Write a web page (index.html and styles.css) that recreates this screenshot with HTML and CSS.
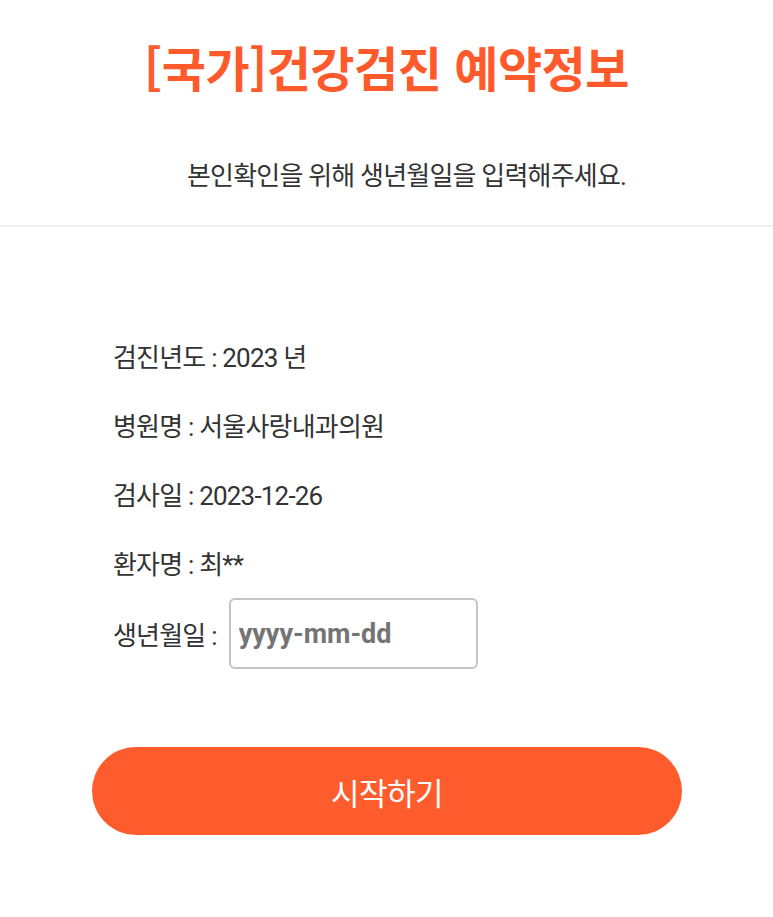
FILE: index.html
```html
<!DOCTYPE html>
<html lang="ko">
<head>
<meta charset="utf-8">
<title>[국가]건강검진 예약정보</title>
<link rel="stylesheet" href="styles.css">
</head>
<body>
<header class="header">
  <h1 class="title">[국가]건강검진 예약정보</h1>
  <p class="subtitle">본인확인을 위해 생년월일을 입력해주세요.</p>
</header>
<main class="info">
  <div class="row">검진년도 : 2023 년</div>
  <div class="row">병원명 : 서울사랑내과의원</div>
  <div class="row">검사일 : 2023-12-26</div>
  <div class="row">환자명 : 최**</div>
  <div class="row row-input">
    <span class="label">생년월일 :</span>
    <input class="birth" type="text" placeholder="yyyy-mm-dd">
  </div>
</main>
<div class="actions">
  <button class="start" type="button">시작하기</button>
</div>
</body>
</html>
```
FILE: styles.css
```css
html, body {
  margin: 0;
  padding: 0;
  background: #fff;
}
body {
  font-family: Roboto, "Noto Sans CJK KR", "Noto Sans", sans-serif;
  color: #333;
}
.header {
  padding-top: 35px;
  border-bottom: 2px solid #f0f0f0;
  padding-bottom: 31px;
}
.title {
  margin: 0;
  text-align: center;
  font-family: "Noto Sans CJK KR", sans-serif;
  font-weight: 700;
  font-size: 48px;
  line-height: 62px;
  letter-spacing: -0.5px;
  color: #ff5a2c;
}
.subtitle {
  margin: 61px 0 0;
  padding-left: 40px;
  text-align: center;
  font-size: 26px;
  line-height: 36px;
  letter-spacing: -0.8px;
  color: #333;
}
.info {
  padding: 94px 0 0 113px;
  display: flex;
  flex-direction: column;
}
.row {
  height: 69px;
  display: flex;
  align-items: center;
  font-size: 26px;
  letter-spacing: -0.8px;
  color: #333;
}
.row-input {
  height: 71px;
  margin-top: 1px;
  gap: 12px;
}
.birth {
  box-sizing: border-box;
  width: 249px;
  height: 71px;
  border: 2px solid #c4c4c4;
  border-radius: 6px;
  padding: 0 8px;
  font-family: Roboto, sans-serif;
  font-size: 27px;
  font-weight: 700;
  color: #333;
  outline: none;
}
.birth::placeholder {
  color: #747474;
}
.actions {
  padding: 78px 0 0 92px;
}
.start {
  width: 590px;
  height: 88px;
  border: none;
  border-radius: 44px;
  background: #ff5c2e;
  color: #fff;
  font-family: Roboto, "Noto Sans CJK KR", sans-serif;
  font-size: 31px;
  font-weight: 400;
  letter-spacing: -0.5px;
  cursor: pointer;
}
```
